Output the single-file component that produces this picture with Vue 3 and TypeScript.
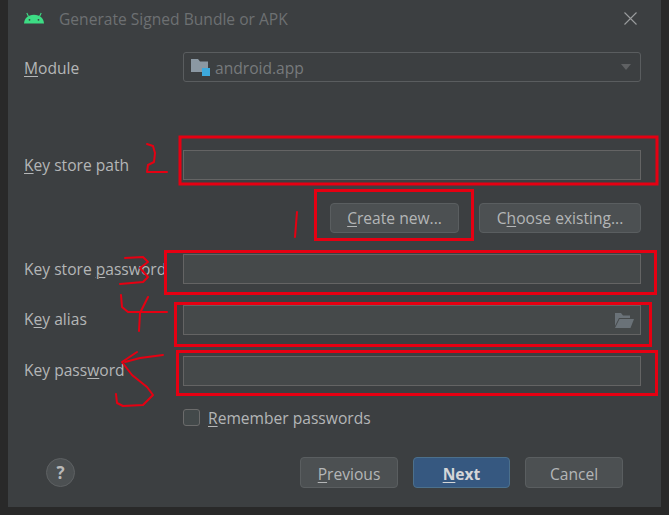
<script setup lang="ts">
const ink: string[] = [
  'M147 144 L153 146 L155 153 L154 162 L148 165 L147 172 L167 172',
  'M297 212 L295 237',
  'M125 258 L143 257 L148 262 L140 268 L148 277 L143 282 L120 284',
  'M121 295 L122 307 L128 312 L167 312',
  'M148 297 L140 313 L139 331',
  'M163 355 L140 358 L125 362',
  'M137 352 L122 362 L132 375 L147 387 L153 395 L143 405 L123 406 L117 403 L116 394',
]
const boxes = [
  { x: 180, y: 137, w: 477, h: 47 },
  { x: 315.5, y: 190.5, w: 157, h: 49 },
  { x: 165.5, y: 251.5, w: 490, h: 42 },
  { x: 175.5, y: 303.5, w: 475, h: 42 },
  { x: 177.5, y: 351.5, w: 479, h: 43 },
]
</script>

<template>
  <div class="screen">
    <div class="dialog">
      <header class="title">
        <svg class="android" width="20" height="12" viewBox="0 0 20 12">
          <path d="M0 11.5C.3 6.6 3.8 2.8 10 2.8s9.7 3.8 10 8.700z" fill="#3ddc84" />
          <path d="M4.500 4.500 2.800 1M15.500 4.500 17.200 1" stroke="#3ddc84" stroke-width="1.100" fill="none" />
          <circle cx="5.500" cy="7.800" r=".9" fill="#3c3f41" />
          <circle cx="14.500" cy="7.800" r=".9" fill="#3c3f41" />
        </svg>
        <span class="title-text">Generate Signed Bundle or APK</span>
        <svg class="close" width="13" height="13" viewBox="0 0 13 13">
          <path d="M.5 .5 12.500 12.500M12.500 .5 .5 12.500" stroke="#9b9d9e" stroke-width="1.100" fill="none" />
        </svg>
      </header>

      <div class="form">
        <label class="label down"><u>M</u>odule</label>
        <div class="combo">
          <svg width="19" height="18" viewBox="0 0 19 18">
            <path d="M0 1h7l2 2.500h8V14H0z" fill="#8b98a3" />
            <rect x="11" y="10" width="8" height="8" fill="#3da9dc" />
          </svg>
          <span class="combo-text">android.app</span>
          <span class="caret"></span>
        </div>

        <label class="label path-row"><u>K</u>ey store path</label>
        <div class="field path-row"></div>

        <div class="buttons-row">
          <button class="btn create"><u>C</u>reate new...</button>
          <button class="btn choose">C<u>h</u>oose existing...</button>
        </div>

        <label class="label">Key store <u>p</u>assword</label>
        <div class="field"></div>

        <label class="label up">K<u>e</u>y alias</label>
        <div class="field alias">
          <svg width="19" height="15" viewBox="0 0 19 15">
            <path d="M0 0h6l2 2.500h7V5H4L0 13z" fill="#6a7278" />
            <path d="M4.500 6H19l-3.500 9H0z" fill="#6a7278" />
          </svg>
        </div>

        <label class="label up">Key pass<u>w</u>ord</label>
        <div class="field"></div>

        <div class="check-row">
          <span class="check"></span>
          <span class="check-text"><u>R</u>emember passwords</span>
        </div>
      </div>

      <footer class="footer">
        <span class="help">?</span>
        <div class="actions">
          <button class="btn action"><u>P</u>revious</button>
          <button class="btn action primary"><u>N</u>ext</button>
          <button class="btn action">Cancel</button>
        </div>
      </footer>
    </div>

    <svg class="marks" width="669" height="515" viewBox="0 0 669 515">
      <rect
        v-for="(b, i) in boxes"
        :key="i"
        :x="b.x"
        :y="b.y"
        :width="b.w"
        :height="b.h"
        fill="none"
        stroke="#e60012"
        stroke-width="3"
      />
      <path
        v-for="(d, i) in ink"
        :key="'i' + i"
        :d="d"
        fill="none"
        stroke="#e60012"
        stroke-width="2"
        stroke-linejoin="round"
        stroke-linecap="round"
      />
    </svg>
  </div>
</template>

<style>
html, body { margin: 0; background: #2b2b2b; }
</style>

<style scoped>
.screen {
  position: relative;
  width: 669px;
  height: 515px;
  overflow: hidden;
  background: #292929;
  font-family: "Open Sans", "Noto Sans", sans-serif;
  font-size: 15.6px;
  color: #b4b6b7;
}
.dialog {
  margin-left: 8px;
  width: 653px;
  height: 507px;
  background: #3c3f41;
  display: flex;
  flex-direction: column;
}
.title {
  height: 36px;
  padding: 0 24px 0 16px;
  display: flex;
  align-items: center;
  flex: none;
}
.android { margin-right: 15px; }
.title-text { color: #6d7072; flex: 1; margin-top: 2px; }
.close { margin-top: 1px; }
.form {
  margin-top: 16px;
  padding: 0 20px 0 16px;
  display: grid;
  grid-template-columns: 159px 458px;
  row-gap: 21px;
  align-items: center;
}
.label { white-space: nowrap; overflow: visible; }
.down { margin-top: 2px; }
.up { margin-bottom: 2px; }
u { text-underline-offset: 2px; text-decoration-thickness: 1px; }
.combo {
  height: 30px;
  box-sizing: border-box;
  border: 1px solid #5a5d5f;
  border-radius: 3px;
  padding: 0 9px 0 7px;
  display: flex;
  align-items: center;
  gap: 5px;
  color: #777a7c;
}
.combo-text { flex: 1; margin-top: 2px; }
.caret {
  width: 0;
  height: 0;
  border-left: 5px solid transparent;
  border-right: 5px solid transparent;
  border-top: 6px solid #5f6163;
}
.path-row { margin-top: 47px; }
.field {
  height: 30px;
  box-sizing: border-box;
  background: #45494a;
  border: 1px solid #646464;
}
.alias {
  display: flex;
  align-items: center;
  justify-content: flex-end;
  padding-right: 6px;
}
.buttons-row {
  grid-column: 1 / -1;
  display: flex;
  justify-content: flex-end;
  gap: 20px;
  margin-top: 2px;
}
.btn {
  height: 30px;
  box-sizing: border-box;
  font: inherit;
  color: inherit;
  background: #4c5052;
  border: 1px solid #5a5e60;
  border-radius: 4px;
  padding: 0;
}
.create { width: 129px; }
.choose { width: 162px; }
.check-row {
  grid-column: 2;
  height: 18px;
  display: flex;
  align-items: center;
  gap: 8px;
  margin-top: 1px;
}
.check {
  width: 17px;
  height: 17px;
  box-sizing: border-box;
  border: 1px solid #6b6b6b;
  border-radius: 3px;
  background: #43494a;
}
.check-text { margin-top: 2px; }
.footer {
  margin-top: 31px;
  padding: 0 38px;
  display: flex;
  align-items: center;
  justify-content: space-between;
}
.help {
  width: 29px;
  height: 29px;
  box-sizing: border-box;
  border: 1px solid #5e6163;
  border-radius: 50%;
  background: #4c5052;
  color: #b9b9b9;
  font-weight: 700;
  font-size: 17px;
  display: flex;
  align-items: center;
  justify-content: center;
}
.actions { display: flex; gap: 15px; }
.action { width: 98px; height: 31px; padding-top: 2px; }
.primary {
  width: 97px;
  background: #365880;
  border-color: #4c708c;
  color: #d4d6d8;
  font-weight: 700;
}
.marks {
  position: absolute;
  left: 0;
  top: 0;
  pointer-events: none;
}
</style>
